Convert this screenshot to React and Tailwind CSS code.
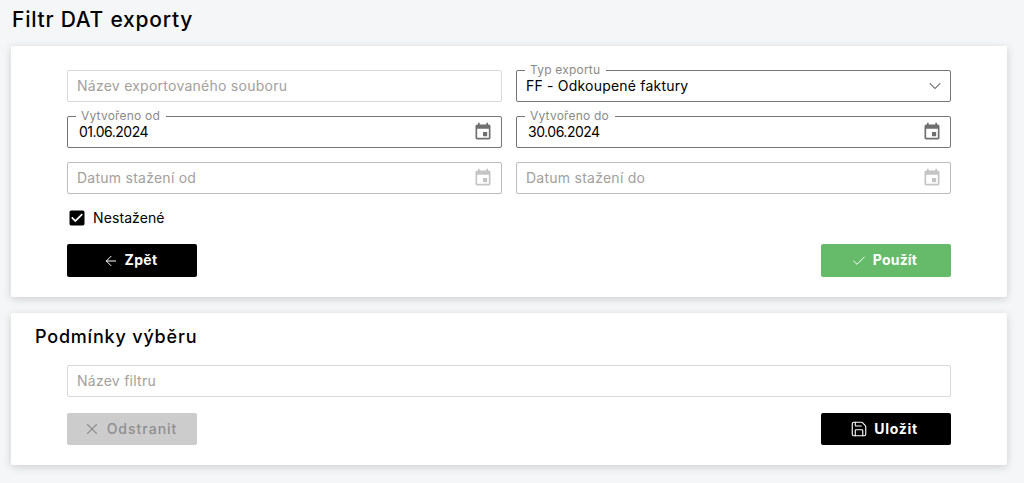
import { ArrowLeft, Check, ChevronDown, Save, X } from "lucide-react";

const EVENT_ICON = "M17 12h-5v5h5v-5zM16 1v2H8V1H6v2H5c-1.11 0-1.99.9-1.99 2L3 19c0 1.1.89 2 2 2h14c1.1 0 2-.9 2-2V5c0-1.1-.9-2-2-2h-1V1h-2zm3 18H5V8h14v11z";

function CalendarIcon({ muted }) {
  return (
    <svg viewBox="0 0 24 24" className={`w-5 h-5 shrink-0 ${muted ? "fill-[#c4c4c4]" : "fill-[#6f6f6f]"}`}>
      <path d={EVENT_ICON} />
    </svg>
  );
}

// Outlined field with the label sitting in the border notch
function Field({ label, value, placeholder, icon, strong, date }) {
  return (
    <div className={`relative h-8 flex items-center justify-between pr-[8px] rounded-[2px] border bg-white ${date ? "pl-[11px]" : "pl-[9px]"} ${strong ? "border-[#757575]" : placeholder && icon ? "border-[#bdbdbd]" : "border-[#d9d9d9]"}`}>
      {label && (
        <span className="absolute -top-[9px] left-[8px] pl-[5px] pr-[6px] bg-white text-[12px] leading-[16px] tracking-[0.2px] text-[#8a8a8a]">{label}</span>
      )}
      {value ? (
        <span className={`pb-[2px] text-[14px] text-black ${date ? "tracking-[-0.5px]" : "tracking-[0.2px]"}`}>{value}</span>
      ) : (
        <span className="pb-[2px] text-[14px] tracking-[0.25px] text-[#a3a09d]">{placeholder}</span>
      )}
      {icon}
    </div>
  );
}

function Button({ icon, children, className }) {
  return (
    <button type="button" className={`w-[130px] pr-[4px] flex items-center justify-center gap-[6px] rounded-[2px] text-[14px] ${className}`}>
      {icon}
      <span className="pb-[2px]">{children}</span>
    </button>
  );
}

export default function App() {
  return (
    <div className="min-h-[483px] bg-[#f5f6f8] pl-[11px] pr-[17px] pb-[18px] font-['Inter','Liberation_Sans',sans-serif]">
      <h1 className="h-[46px] pl-px pt-[6px] text-[21px] leading-[28px] font-medium tracking-[0.75px] text-black">Filtr DAT exporty</h1>

      <section className="bg-white rounded-[2px] shadow-[0_2px_8px_rgba(0,0,0,0.16)] px-14 pt-6 pb-5">
        <div className="grid grid-cols-2 gap-x-[14px] gap-y-[14px]">
          <Field placeholder="Název exportovaného souboru" />
          <Field
            label="Typ exportu"
            value="FF - Odkoupené faktury"
            strong
            icon={<ChevronDown size={20} strokeWidth={1.25} className="-mr-[3px] text-[#555]" />}
          />
          <Field label="Vytvořeno od" value="01.06.2024" strong date icon={<CalendarIcon />} />
          <Field label="Vytvořeno do" value="30.06.2024" strong date icon={<CalendarIcon />} />
          <Field placeholder="Datum stažení od" icon={<CalendarIcon muted />} />
          <Field placeholder="Datum stažení do" icon={<CalendarIcon muted />} />
        </div>

        <label className="mt-[14px] h-5 flex items-center gap-[6px] text-[14px] tracking-[0.1px] text-black">
          <svg viewBox="0 0 24 24" className="w-5 h-5">
            <path d="M19 3H5c-1.11 0-2 .9-2 2v14c0 1.1.89 2 2 2h14c1.11 0 2-.89 2-2V5c0-1.1-.89-2-2-2zm-9 14l-5-5 1.41-1.41L10 14.17l7.59-7.59L19 8l-9 9z" />
          </svg>
          <span className="pb-[2px]">Nestažené</span>
        </label>

        <div className="mt-[16px] flex justify-between">
          <Button className="h-[33px] bg-black text-white font-bold tracking-[0.3px]" icon={<ArrowLeft size={16} strokeWidth={1.5} />}>
            Zpět
          </Button>
          <Button className="h-[33px] bg-[#66bb6a] text-white font-bold tracking-[0.2px]" icon={<Check size={16} strokeWidth={1.5} />}>
            Použít
          </Button>
        </div>
      </section>

      <section className="mt-4 bg-white rounded-[2px] shadow-[0_2px_8px_rgba(0,0,0,0.16)] pt-[12px] pb-5">
        <h2 className="pl-6 text-[18px] leading-[24px] font-medium tracking-[0.8px] text-black">Podmínky výběru</h2>
        <div className="px-14 mt-4">
          <Field placeholder="Název filtru" />
          <div className="mt-4 flex justify-between">
            <Button className="h-8 bg-[#cccccc] text-[#8f8f8f] font-medium tracking-[1px]" icon={<X size={18} strokeWidth={1.5} />}>
              Odstranit
            </Button>
            <Button className="h-8 bg-black text-white font-bold tracking-[0.7px]" icon={<Save size={18} strokeWidth={1.5} />}>
              Uložit
            </Button>
          </div>
        </div>
      </section>
    </div>
  );
}
